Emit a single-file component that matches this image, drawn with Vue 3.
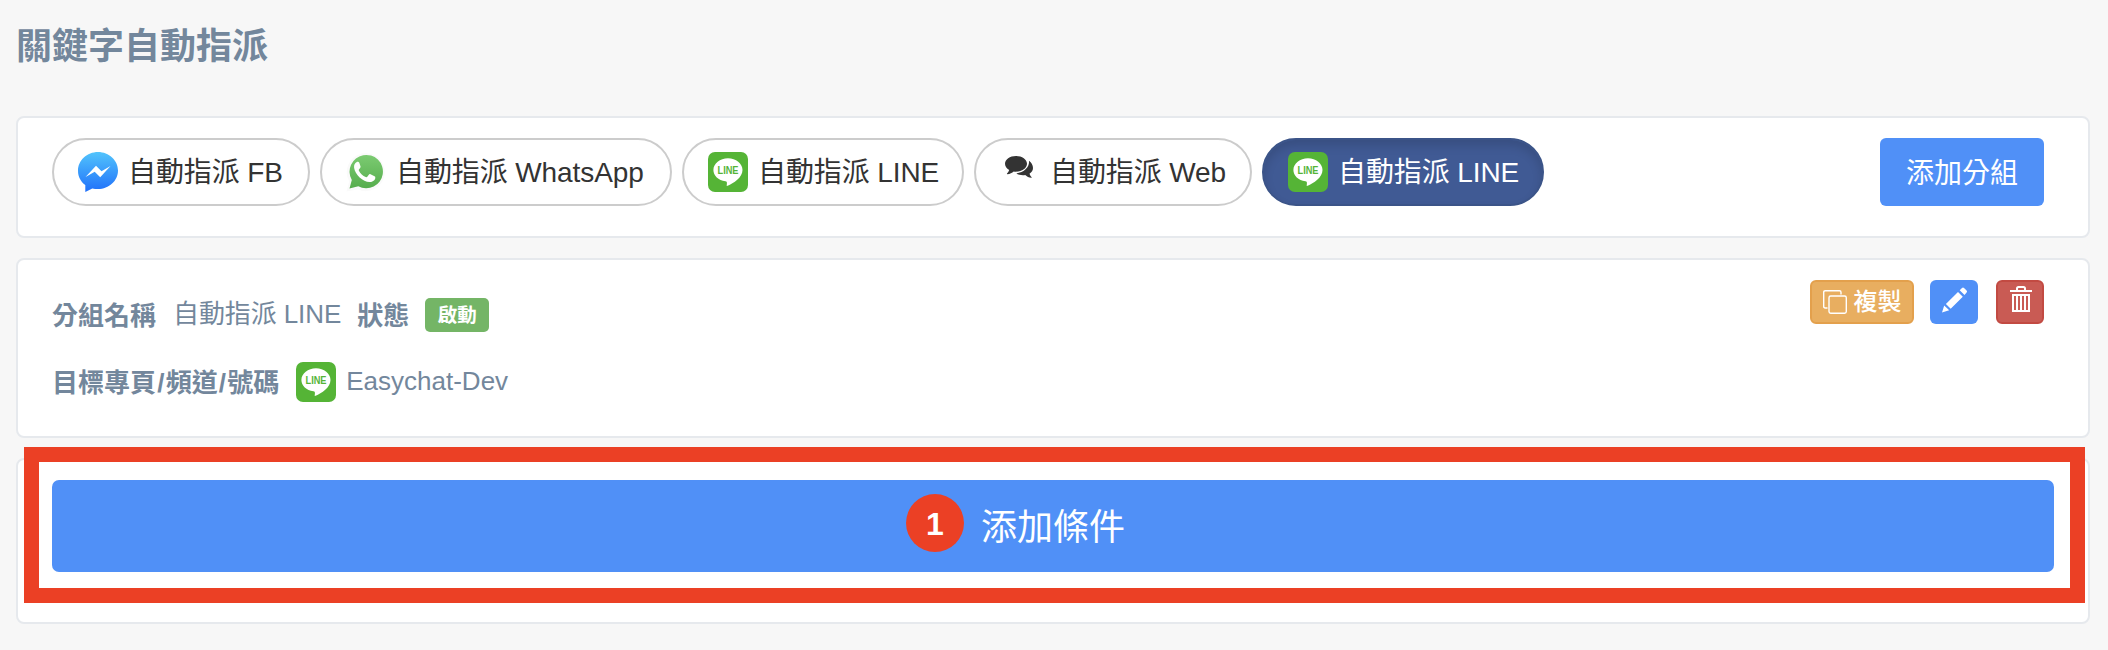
<script setup>
const tabs = [
  { icon: 'messenger', label: '自動指派 FB', cls: 'w-fb' },
  { icon: 'whatsapp', label: '自動指派 WhatsApp', cls: 'w-wa' },
  { icon: 'line', label: '自動指派 LINE', cls: 'w-line' },
  { icon: 'web', label: '自動指派 Web', cls: 'w-web' },
  { icon: 'line', label: '自動指派 LINE', cls: 'w-line', active: true },
]
</script>

<template>
  <main class="page">
    <svg class="defs" width="0" height="0" aria-hidden="true">
      <defs>
        <linearGradient id="gFb" x1="0" y1="0" x2="0" y2="1">
          <stop offset="0" stop-color="#52c4fc" />
          <stop offset="1" stop-color="#2070fa" />
        </linearGradient>
        <linearGradient id="gWa" x1="0" y1="0" x2="0" y2="1">
          <stop offset="0" stop-color="#7ccb72" />
          <stop offset="1" stop-color="#56ad4d" />
        </linearGradient>
        <symbol id="line" viewBox="0 0 40 40">
          <rect width="40" height="40" rx="7" fill="#55b436" />
          <path d="M20 6.300C12 6.300 5.400 11.500 5.400 18c0 5.700 5 10.300 12 11.300 1.600.3 1.800 1.200 1.300 4.100 0 .5.3.7.9.4C25.500 31.300 34.500 25.500 34.500 18 34.500 11.500 28 6.300 20 6.300z" fill="#fff" />
          <text x="9.500" y="22" font-size="10" font-weight="700" textLength="21" lengthAdjust="spacingAndGlyphs" fill="#55b436">LINE</text>
        </symbol>
      </defs>
    </svg>

    <h1 class="title">關鍵字自動指派</h1>

    <section class="card tabs-card">
      <nav class="tabs">
        <button v-for="(t, i) in tabs" :key="i" class="pill" :class="[t.cls, { active: t.active }]">
          <svg v-if="t.icon === 'messenger'" class="ico" viewBox="0 0 40 40">
            <path d="M20 0C9 0 0 8.300 0 18.700c0 6 2.700 10.800 7.300 14.300V40l7-3.600c1.800.5 3.700.7 5.700.7 11 0 20-8.200 20-18.500S31 0 20 0z" fill="url(#gFb)" />
            <path d="M7.500 25 18 13.800l5.500 5.500L32.500 14 22.200 25.200l-5.500-5.500z" fill="#fff" />
          </svg>
          <svg v-else-if="t.icon === 'whatsapp'" class="ico" viewBox="0 0 40 40">
            <path d="M.5 39.500l2.700-10A19 19 0 1 1 12 37.500z" fill="#fafafa" />
            <path d="M3.500 36.500l2.300-8.500A16.700 16.700 0 1 1 12.300 34.300z" fill="url(#gWa)" />
            <path d="M13.300 10.800c-.7-1.200-1.200-1.200-2.500-.8-2 1-3 3-2.700 5.800.8 7 9.300 14.500 15.800 14.200 2.800-.2 5.300-1.800 5.400-4.300.1-.8-.1-1.200-.8-1.500l-4-1.900c-.8-.4-1.200-.2-1.700.5l-1.500 1.900c-.5.5-.9.6-1.600.3-3-1.300-5.300-3.500-6.800-6.300-.3-.6-.2-1 .2-1.500l1.200-1.500c.4-.6.4-1 .1-1.600z" fill="#fff" />
          </svg>
          <svg v-else-if="t.icon === 'line'" class="ico" viewBox="0 0 40 40"><use href="#line" /></svg>
          <svg v-else class="ico-web" viewBox="0 0 28 22">
            <path d="M11 0C4.900 0 0 3.500 0 7.800c0 2.500 1.600 4.700 4.200 6.200C3.700 15.400 3 16.500 2 17.500c-.2.300 0 .7.400.7 2.500-.2 4.700-1.200 6.300-2.700.8.1 1.500.2 2.300.2 6.100 0 11-3.500 11-7.900S17.100 0 11 0z" />
            <path d="M24 4.800c.8 6.200-5 11.700-12.800 12.700 1.800 1.100 4.200 1.700 6.800 1.700.8 0 1.500-.1 2.200-.2 1.700 1.600 3.700 2.600 6.100 2.800.4 0 .6-.3.3-.6-.9-.9-1.600-2-2.100-3.400 2.200-1.400 3.500-3.400 3.500-5.700 0-3-1.500-5.600-4-7.300z" />
          </svg>
          <span class="label">{{ t.label }}</span>
        </button>
      </nav>
      <button class="add-group">添加分組</button>
    </section>

    <section class="card info-card">
      <div class="info">
        <div class="row">
          <b>分組名稱</b><span class="val name">自動指派 LINE</span><b class="st">狀態</b><span class="badge">啟動</span>
        </div>
        <div class="row second">
          <b class="target">目標專頁<i>/</i>頻道<i>/</i>號碼</b><svg class="chan" viewBox="0 0 40 40"><use href="#line" /></svg><span class="val dev">Easychat-Dev</span>
        </div>
      </div>
      <div class="actions">
        <button class="act copy">
          <svg width="24" height="24" viewBox="0 0 24 24" fill="none" stroke="#fff" stroke-width="1.4">
            <path d="M4.500 18H2.200Q.7 18 .7 16.500V2.200Q.7.7 2.200.7h14.300Q18 .7 18 2.200v2.300" />
            <rect x="6" y="6" width="17.300" height="17.300" rx="1.700" />
          </svg>
          <span>複製</span>
        </button>
        <button class="act edit">
          <svg width="26" height="26" viewBox="0 0 26 26" fill="#fff">
            <path d="M0 25.500 2.200 18.500 7.200 23.300zM3.900 17 16 5l4.800 4.800L8.700 21.800zM17.700 3.200 20 .9q1-.8 2 0l2.600 2.700q.9 1 0 2L22.500 8z" />
          </svg>
        </button>
        <button class="act del">
          <svg width="22" height="26" viewBox="0 0 22 26" fill="none" stroke="#fff" stroke-width="2">
            <path d="M0 5h22M7 5V2.500Q7 1 8.500 1h5Q15 1 15 2.500V5" />
            <path d="M3 8v17h16V8M2 9h18M7 9v15M11 9v15M15 9v15" />
          </svg>
        </button>
      </div>
    </section>

    <section class="card cond-card">
      <button class="add-cond">添加條件</button>
      <div class="frame"></div>
      <div class="step">1</div>
    </section>
  </main>
</template>

<style>
body { background: #f7f7f7; }
</style>

<style scoped>
.page {
  box-sizing: border-box;
  width: 2108px;
  height: 650px;
  padding: 0 18px 0 16px;
  background: #f7f7f7;
  color: #73879c;
  font-family: "Liberation Sans", "Noto Sans CJK TC", sans-serif;
}
.defs { position: absolute; }
button { font-family: inherit; box-sizing: border-box; margin: 0; padding: 0; border: 0; }
svg { display: block; flex: none; }
.title { box-sizing: border-box; margin: 0; padding-top: 2px; height: 116px; font-size: 36px; line-height: 90px; font-weight: 700; }
.card {
  box-sizing: border-box;
  display: flex;
  justify-content: space-between;
  align-items: flex-start;
  border: 2px solid #e6e9ed;
  border-radius: 8px;
  background: #fff;
  padding: 20px 44px 0 34px;
  margin-bottom: 20px;
}
.tabs-card { height: 122px; }
.tabs { display: flex; gap: 10px; }
.pill {
  display: flex;
  align-items: center;
  height: 68px;
  padding-left: 24px;
  border: 2px solid #ccc;
  border-radius: 34px;
  background: #fff;
  color: #333;
  font-size: 28px;
  line-height: 62px;
  white-space: nowrap;
}
.label { padding-top: 2px; letter-spacing: -0.1px; }
.w-fb { width: 258px; }
.w-wa { width: 352px; }
.w-line { width: 282px; }
.w-web { width: 278px; }
.ico { width: 40px; height: 40px; margin-right: 10px; }
.ico-web { width: 28px; height: 22px; margin: -10px 17px 0 5px; fill: #333; }
.active {
  background: #405a94;
  border-color: #3b5488;
  color: #fff;
  box-shadow: inset 0 6px 10px rgba(0, 0, 0, 0.125);
}
.add-group {
  width: 164px;
  height: 68px;
  padding-bottom: 2px;
  border-radius: 6px;
  background: #5090f7;
  color: #fff;
  font-size: 28px;
}
.info-card { height: 180px; }
.info { padding-top: 15px; font-size: 26px; }
.row { display: flex; align-items: center; height: 40px; white-space: nowrap; }
.row b { margin-top: -4px; }
.second { margin-top: 27px; }
.target i { font-style: normal; padding: 0 1.200px; }
.row .name { margin: -7px 0 0 17px; letter-spacing: -0.1px; }
.val { margin-top: -3px; }
.dev { margin-top: -1px; }
.row .st { margin-left: 16px; }
.badge {
  width: 64px;
  height: 34px;
  margin-left: 16px;
  border-radius: 5px;
  background: #74b566;
  color: #fff;
  font-size: 19.500px;
  font-weight: 700;
  line-height: 34px;
  text-align: center;
}
.chan { width: 40px; height: 40px; margin: 0 10px 0 17px; }
.actions { display: flex; }
.act {
  display: flex;
  align-items: center;
  justify-content: center;
  height: 44px;
  width: 48px;
  border-radius: 6px;
  color: #fff;
}
.copy { width: 104px; gap: 7px; background: #e8ae60; border: 2px solid #e3a04c; font-size: 24px; font-weight: 500; }
.copy span { margin-top: -5px; }
.edit { margin-left: 16px; background: #5090f7; }
.edit svg { margin: -4px 0 0 2px; }
.del { margin-left: 18px; background: #c95b54; border: 2px solid #c24a42; }
.del svg { margin: -6px 0 0 2px; }
.cond-card { position: relative; height: 166px; margin-bottom: 0; padding: 20px 34px 0; }
.add-cond {
  width: 100%;
  height: 92px;
  padding-bottom: 5px;
  border-radius: 7px;
  background: #5090f7;
  color: #fff;
  font-size: 36px;
}
/* Annotation marks lying over the button */
.frame {
  position: absolute;
  box-sizing: border-box;
  left: 6px;
  top: -13px;
  width: 2061px;
  height: 156px;
  border: 15px solid #eb4025;
}
.step {
  position: absolute;
  left: 888px;
  top: 34px;
  width: 58px;
  height: 58px;
  border-radius: 50%;
  background: #eb4025;
  color: #fff;
  font-size: 32px;
  font-weight: 700;
  line-height: 60px;
  text-align: center;
}
</style>
